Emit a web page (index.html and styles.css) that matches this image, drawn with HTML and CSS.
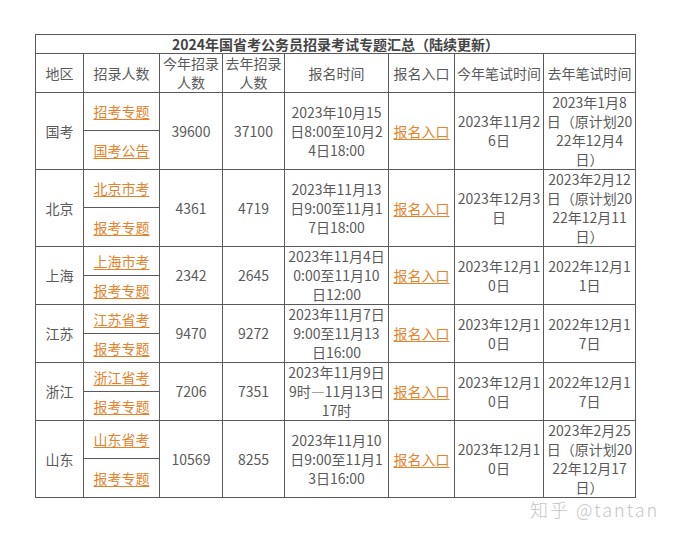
FILE: index.html
```html
<!DOCTYPE html>
<html lang="zh">
<head>
<meta charset="utf-8">
<link rel="stylesheet" href="styles.css">
</head>
<body>
<div class="page">
<table class="summary">
<colgroup>
<col class="c1"><col class="c2"><col class="c3"><col class="c4"><col class="c5"><col class="c6"><col class="c7"><col class="c8">
</colgroup>
<tr class="r-title"><td colspan="8" class="title">2024年国省考公务员招录考试专题汇总（陆续更新）</td></tr>
<tr class="r-head">
<td>地区</td><td>招录人数</td><td>今年招录<br>人数</td><td>去年招录<br>人数</td><td>报名时间</td><td>报名入口</td><td>今年笔试时间</td><td>去年笔试时间</td>
</tr>

<tr class="r-big1">
<td rowspan="2">国考</td><td><a href="#">招考专题</a></td><td rowspan="2">39600</td><td rowspan="2">37100</td>
<td rowspan="2">2023年10月15<br>日8:00至10月2<br>4日18:00</td><td rowspan="2"><a href="#">报名入口</a></td>
<td rowspan="2">2023年11月2<br>6日</td><td rowspan="2">2023年1月8<br>日（原计划20<br>22年12月4<br>日）</td>
</tr>
<tr class="r-big2"><td><a href="#">国考公告</a></td></tr>

<tr class="r-big1">
<td rowspan="2">北京</td><td><a href="#">北京市考</a></td><td rowspan="2">4361</td><td rowspan="2">4719</td>
<td rowspan="2">2023年11月13<br>日9:00至11月1<br>7日18:00</td><td rowspan="2"><a href="#">报名入口</a></td>
<td rowspan="2">2023年12月3<br>日</td><td rowspan="2">2023年2月12<br>日（原计划20<br>22年12月11<br>日）</td>
</tr>
<tr class="r-big2"><td><a href="#">报考专题</a></td></tr>

<tr class="r-sm1">
<td rowspan="2">上海</td><td><a href="#">上海市考</a></td><td rowspan="2">2342</td><td rowspan="2">2645</td>
<td rowspan="2">2023年11月4日<br>0:00至11月10<br>日12:00</td><td rowspan="2"><a href="#">报名入口</a></td>
<td rowspan="2">2023年12月1<br>0日</td><td rowspan="2">2022年12月1<br>1日</td>
</tr>
<tr class="r-sm2"><td><a href="#">报考专题</a></td></tr>

<tr class="r-sm1">
<td rowspan="2">江苏</td><td><a href="#">江苏省考</a></td><td rowspan="2">9470</td><td rowspan="2">9272</td>
<td rowspan="2">2023年11月7日<br>9:00至11月13<br>日16:00</td><td rowspan="2"><a href="#">报名入口</a></td>
<td rowspan="2">2023年12月1<br>0日</td><td rowspan="2">2022年12月1<br>7日</td>
</tr>
<tr class="r-sm2"><td><a href="#">报考专题</a></td></tr>

<tr class="r-sm1">
<td rowspan="2">浙江</td><td><a href="#">浙江省考</a></td><td rowspan="2">7206</td><td rowspan="2">7351</td>
<td rowspan="2">2023年11月9日<br>9时—11月13日<br>17时</td><td rowspan="2"><a href="#">报名入口</a></td>
<td rowspan="2">2023年12月1<br>0日</td><td rowspan="2">2022年12月1<br>7日</td>
</tr>
<tr class="r-sm2"><td><a href="#">报考专题</a></td></tr>

<tr class="r-big1">
<td rowspan="2">山东</td><td><a href="#">山东省考</a></td><td rowspan="2">10569</td><td rowspan="2">8255</td>
<td rowspan="2">2023年11月10<br>日9:00至11月1<br>3日16:00</td><td rowspan="2"><a href="#">报名入口</a></td>
<td rowspan="2">2023年12月1<br>0日</td><td rowspan="2">2023年2月25<br>日（原计划20<br>22年12月17<br>日）</td>
</tr>
<tr class="r-big2"><td><a href="#">报考专题</a></td></tr>
</table>
<div class="watermark">知乎 @tantan</div>
</div>
</body>
</html>
```

FILE: styles.css
```css
html, body {
  margin: 0;
  padding: 0;
  background: #ffffff;
}
body {
  font-family: "Noto Sans CJK SC", "Noto Sans", sans-serif;
  color: #5a5a5a;
}
.page {
  position: relative;
  width: 674px;
  height: 537px;
  padding: 34px 0 0 35px;
  box-sizing: border-box;
}
.summary {
  border-collapse: collapse;
  table-layout: fixed;
  width: 600px;
  font-size: 14px;
  line-height: 19px;
}
.c1 { width: 48px; }
.c2 { width: 76px; }
.c3 { width: 63px; }
.c4 { width: 62px; }
.c5 { width: 104px; }
.c6 { width: 66px; }
.c7 { width: 89px; }
.c8 { width: 92px; }
.summary td {
  border: 1px solid #5a5a5a;
  padding: 0 1px;
  text-align: center;
  vertical-align: middle;
  white-space: nowrap;
  overflow: visible;
}
.summary .title {
  font-weight: bold;
  font-size: 14px;
  color: #444444;
  line-height: 18px;
}
.r-title { height: 19px; }
.r-head { height: 39px; }
.r-big1 { height: 38px; }
.r-big2 { height: 39px; }
.r-sm1 { height: 29px; }
.r-sm2 { height: 29px; }
.summary a {
  color: #e6822a;
  text-decoration: underline;
  text-underline-offset: 2px;
}
.watermark {
  position: absolute;
  left: 530px;
  top: 500px;
  font-family: "Noto Sans CJK SC", "Noto Sans", sans-serif;
  font-size: 18px;
  line-height: 18px;
  font-weight: 300;
  color: #c6c6c6;
  letter-spacing: 2px;
}
```
